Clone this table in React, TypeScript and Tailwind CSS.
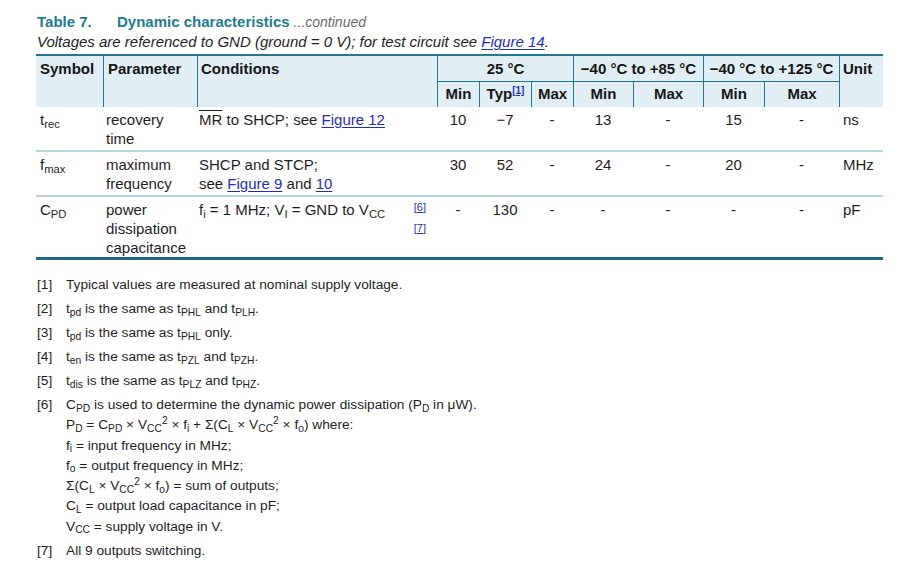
import React from 'react';

const cols = 'grid grid-cols-[67px_94px_240px_42px_52px_42px_60px_70px_61px_75px_44px]';
const teal = 'border-[#23798c]';

function Lnk({ children }: { children: React.ReactNode }) {
  return <span className="text-[#1f2fb8] underline underline-offset-2">{children}</span>;
}

function Ref({ n }: { n: number }) {
  return <span className="text-[11px] leading-[10px] text-[#1f2fb8] underline">[{n}]</span>;
}

type Row = {
  sym: React.ReactNode;
  param: string[];
  cond: React.ReactNode;
  vals: string[];
  unit: string;
  last?: boolean;
};

const rows: Row[] = [
  {
    sym: <>t<sub>rec</sub></>,
    param: ['recovery', 'time'],
    cond: <><span className="overline">MR</span> to SHCP; see <Lnk>Figure 12</Lnk></>,
    vals: ['10', '\u22127', '-', '13', '-', '15', '-'],
    unit: 'ns',
  },
  {
    sym: <>f<sub>max</sub></>,
    param: ['maximum', 'frequency'],
    cond: <>SHCP and STCP;<br />see <Lnk>Figure 9</Lnk> and <Lnk>10</Lnk></>,
    vals: ['30', '52', '-', '24', '-', '20', '-'],
    unit: 'MHz',
  },
  {
    sym: <>C<sub>PD</sub></>,
    param: ['power', 'dissipation', 'capacitance'],
    cond: (
      <div className="flex justify-between pr-[11px]">
        <span>f<sub>i</sub> = 1 MHz; V<sub>I</sub> = GND to V<sub>CC</sub></span>
        <span className="flex flex-col items-end gap-[11px] pt-[2px]">
          <Ref n={6} />
          <Ref n={7} />
        </span>
      </div>
    ),
    vals: ['-', '130', '-', '-', '-', '-', '-'],
    unit: 'pF',
    last: true,
  },
];

function BodyRow({ r }: { r: Row }) {
  return (
    <div
      className={`${cols} text-[15px] leading-[19px] text-[#1e1e1e] ${
        r.last ? 'h-[63px] border-b-[3px] border-[#1f6b80]' : 'h-[45px] border-b-2 border-[#b4d5dd]'
      }`}
    >
      <div className="pl-[4px] pt-[3px]">{r.sym}</div>
      <div className="pl-[3px] pt-[3px]">
        {r.param.map((p) => (
          <div key={p}>{p}</div>
        ))}
      </div>
      <div className="pl-[2px] pt-[3px]">{r.cond}</div>
      {r.vals.map((v, i) => (
        <div key={i} className="pt-[3px] text-center">
          {v}
        </div>
      ))}
      <div className="pl-[4px] pt-[3px]">{r.unit}</div>
    </div>
  );
}

function Note({ n, children }: { n: number; children: React.ReactNode }) {
  return (
    <div className="flex">
      <div className="w-[29px] shrink-0">[{n}]</div>
      <div>{children}</div>
    </div>
  );
}

export default function App() {
  const th = 'font-bold text-[15px] leading-[19px] text-[#161616]';
  return (
    <div className="min-h-screen bg-white pl-[36px] pt-[12px] font-['Liberation_Sans',Arial,sans-serif] text-[#1e1e1e]">
      <div className="flex items-baseline text-[15px] leading-[20px] font-bold text-[#1f7b8e]">
        <span className="w-[81px] pl-[1px]">Table 7.</span>
        <span>Dynamic characteristics</span>
        <span className="ml-[4px] text-[14px] font-normal italic text-[#6b6b6b]">...continued</span>
      </div>
      <div className="pl-[1px] text-[15px] leading-[20px] italic">
        Voltages are referenced to GND (ground = 0 V); for test circuit see <Lnk>Figure 14</Lnk>.
      </div>

      <div className="mt-[2px] w-[847px]">
        <div className={`${cols} grid-rows-[26px_25px] border-t-2 ${teal} bg-[#e1eef3] ${th}`}>
          <div className="row-span-2 pl-[4px] pt-[3px]">Symbol</div>
          <div className={`row-span-2 border-l ${teal} pl-[4px] pt-[3px]`}>Parameter</div>
          <div className={`row-span-2 border-l ${teal} pl-[3px] pt-[3px]`}>Conditions</div>
          <div className={`col-span-3 border-l border-b ${teal} pt-[3px] text-center`}>25 °C</div>
          <div className={`col-span-2 border-l border-b ${teal} pt-[3px] text-center`}>−40 °C to +85 °C</div>
          <div className={`col-span-2 border-l border-b ${teal} pt-[3px] text-center`}>−40 °C to +125 °C</div>
          <div className={`row-span-2 border-l ${teal} pl-[3px] pt-[3px]`}>Unit</div>
          <div className={`border-l ${teal} pt-[2px] text-center`}>Min</div>
          <div className={`border-l ${teal} pt-[2px] text-center`}>
            Typ<sup className="text-[10px] font-bold text-[#1f2fb8] underline">[1]</sup>
          </div>
          <div className={`border-l ${teal} pt-[2px] text-center`}>Max</div>
          <div className={`border-l ${teal} pt-[2px] text-center`}>Min</div>
          <div className={`border-l ${teal} pt-[2px] text-center`}>Max</div>
          <div className={`border-l ${teal} pt-[2px] text-center`}>Min</div>
          <div className={`border-l ${teal} pt-[2px] text-center`}>Max</div>
        </div>
        {rows.map((r, i) => (
          <BodyRow key={i} r={r} />
        ))}
      </div>

      <div className="mt-[15px] flex flex-col gap-[4px] pl-[1px] text-[13.7px] leading-[20px] text-[#1e1e1e]">
        <Note n={1}>Typical values are measured at nominal supply voltage.</Note>
        <Note n={2}>
          t<sub>pd</sub> is the same as t<sub>PHL</sub> and t<sub>PLH</sub>.
        </Note>
        <Note n={3}>
          t<sub>pd</sub> is the same as t<sub>PHL</sub> only.
        </Note>
        <Note n={4}>
          t<sub>en</sub> is the same as t<sub>PZL</sub> and t<sub>PZH</sub>.
        </Note>
        <Note n={5}>
          t<sub>dis</sub> is the same as t<sub>PLZ</sub> and t<sub>PHZ</sub>.
        </Note>
        <Note n={6}>
          <div className="leading-[20.3px]">
            <div>
              C<sub>PD</sub> is used to determine the dynamic power dissipation (P<sub>D</sub> in μW).
            </div>
            <div>
              P<sub>D</sub> = C<sub>PD</sub> × V<sub>CC</sub><sup>2</sup> × f<sub>i</sub> + Σ(C<sub>L</sub> × V
              <sub>CC</sub>
              <sup>2</sup> × f<sub>o</sub>) where:
            </div>
            <div>
              f<sub>i</sub> = input frequency in MHz;
            </div>
            <div>
              f<sub>o</sub> = output frequency in MHz;
            </div>
            <div>
              Σ(C<sub>L</sub> × V<sub>CC</sub>
              <sup>2</sup> × f<sub>o</sub>) = sum of outputs;
            </div>
            <div>
              C<sub>L</sub> = output load capacitance in pF;
            </div>
            <div>
              V<sub>CC</sub> = supply voltage in V.
            </div>
          </div>
        </Note>
        <Note n={7}>All 9 outputs switching.</Note>
      </div>
    </div>
  );
}
